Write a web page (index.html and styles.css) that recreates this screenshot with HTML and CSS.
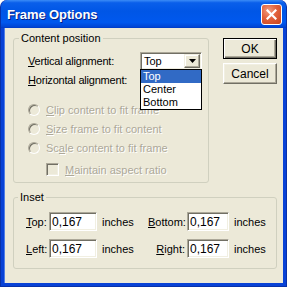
FILE: index.html
```html
<!DOCTYPE html>
<html lang="en">
<head>
    <meta charset="UTF-8">
    <title>Frame Options</title>
    <link rel="stylesheet" href="styles.css">
</head>
<body>

    <div class="window">
        <div class="titlebar">
            <span class="title">Frame Options</span>
            <button class="close-btn" title="Close">
                <svg width="11" height="11" viewBox="0 0 11 11">
                    <path d="M1.5 1.5 L9.5 9.5 M9.5 1.5 L1.5 9.5" stroke="#fff" stroke-width="2.2" stroke-linecap="square"/>
                </svg>
            </button>
        </div>

        <div class="client">
            <div class="top-row">
                <fieldset class="group content-group">
                    <legend>Content position</legend>

                    <div class="field-row">
                        <span class="field-label"><u>V</u>ertical alignment:</span>
                        <div class="combo">
                            <span class="combo-value">Top</span>
                            <span class="combo-btn">
                                <svg width="7" height="4" viewBox="0 0 7 4"><path d="M0 0 H7 L3.5 4 Z" fill="#000"/></svg>
                            </span>
                            <ul class="combo-list">
                                <li class="selected">Top</li>
                                <li>Center</li>
                                <li>Bottom</li>
                            </ul>
                        </div>
                    </div>

                    <div class="field-row">
                        <span class="field-label"><u>H</u>orizontal alignment:</span>
                        <div class="combo"></div>
                    </div>

                    <div class="options">
                        <div class="option disabled"><span class="radio"></span><span><u>C</u>lip content to fit frame</span></div>
                        <div class="option disabled"><span class="radio"></span><span><u>S</u>ize frame to fit content</span></div>
                        <div class="option disabled"><span class="radio"></span><span>Sc<u>a</u>le content to fit frame</span></div>
                        <div class="option disabled sub"><span class="checkbox"></span><span><u>M</u>aintain aspect ratio</span></div>
                    </div>
                </fieldset>

                <div class="buttons">
                    <button class="btn btn-default">OK</button>
                    <button class="btn">Cancel</button>
                </div>
            </div>

            <fieldset class="group inset-group">
                <legend>Inset</legend>
                <div class="inset-grid">
                    <span class="inset-label"><u>T</u>op:</span>
                    <input class="text-field" type="text" value="0,167">
                    <span class="unit">inches</span>
                    <span class="inset-label right"><u>B</u>ottom:</span>
                    <input class="text-field narrow" type="text" value="0,167">
                    <span class="unit">inches</span>

                    <span class="inset-label"><u>L</u>eft:</span>
                    <input class="text-field" type="text" value="0,167">
                    <span class="unit">inches</span>
                    <span class="inset-label right"><u>R</u>ight:</span>
                    <input class="text-field narrow" type="text" value="0,167">
                    <span class="unit">inches</span>
                </div>
            </fieldset>
        </div>
    </div>

</body>
</html>
```

FILE: styles.css
```css
* {
    margin: 0;
    padding: 0;
    box-sizing: border-box;
}
html, body {
    width: 287px;
    height: 287px;
    background-color: #ffffff;
    font-family: "Liberation Sans", Arial, sans-serif;
    font-size: 11px;
    color: #000;
}
.window {
    width: 287px;
    height: 287px;
    display: flex;
    flex-direction: column;
    background-color: #0842d6;
    border-radius: 7px 7px 0 0;
    border: 1px solid #0831a8;
    border-top: none;
}
.titlebar {
    height: 28px;
    display: flex;
    align-items: center;
    justify-content: space-between;
    padding: 0 4px 0 6px;
    border-radius: 7px 7px 0 0;
    background: linear-gradient(#3b8cf7 0%, #0a5fea 10%, #0056e6 40%, #0058ee 80%, #0046d6 95%, #003ac4 100%);
}
.title {
    color: #fff;
    font-weight: bold;
    font-size: 13px;
    letter-spacing: -0.1px;
    text-shadow: 1px 1px #0a1f80;
    padding-top: 1px;
}
.close-btn {
    width: 21px;
    height: 21px;
    border: 1px solid #fff;
    border-radius: 3px;
    background: radial-gradient(circle at 35% 30%, #f29c7f 0%, #e2613b 45%, #c8431c 100%);
    display: flex;
    align-items: center;
    justify-content: center;
    margin-top: 1px;
}
.client {
    flex-grow: 1;
    background-color: #ece9d8;
    margin: 0 3px 3px 3px;
    padding: 4px 6px 0 8px;
    border-left: 1px solid #4f7ee6;
}
.top-row {
    display: flex;
    gap: 14px;
    align-items: flex-start;
}
.group {
    border: 1px solid #d0d0bf;
    border-radius: 3px;
}
.group legend {
    padding: 0 2px;
    line-height: 13px;
}
.content-group {
    width: 197px;
    height: 151px;
    padding: 6px 0 0 14px;
}
.content-group legend {
    margin-left: -9px;
}
.field-row {
    display: flex;
    align-items: center;
    height: 19px;
}
.field-label {
    width: 112px;
    white-space: nowrap;
    letter-spacing: -0.2px;
}
.combo {
    position: relative;
    width: 62px;
    height: 18px;
    background-color: #fff;
    border: 1px solid;
    border-color: #aca899 #fff #fff #aca899;
    box-shadow: inset 1px 1px #716f64, inset -1px -1px #f1efe2;
    display: flex;
    align-items: center;
    padding-left: 3px;
}
.combo-value {
    flex-grow: 1;
}
.combo-btn {
    width: 16px;
    height: 14px;
    margin-right: 1px;
    background-color: #ece9d8;
    border: 1px solid;
    border-color: #f1efe2 #716f64 #716f64 #f1efe2;
    box-shadow: inset -1px -1px #aca899, inset 1px 1px #fff;
    display: flex;
    align-items: center;
    justify-content: center;
}
.combo-list {
    position: absolute;
    top: 16px;
    left: -1px;
    width: 62px;
    list-style: none;
    background-color: #fff;
    border: 1px solid #000;
    z-index: 2;
}
.combo-list li {
    height: 13px;
    line-height: 13px;
    padding-left: 2px;
}
.combo-list li.selected {
    background-color: #316ac5;
    color: #fff;
}
.options {
    display: flex;
    flex-direction: column;
    padding-top: 14px;
    gap: 6px;
}
.option {
    display: flex;
    align-items: center;
    gap: 6px;
    height: 13px;
}
.option.sub {
    padding-left: 18px;
    margin-top: 3px;
}
.option.disabled {
    color: #aca899;
    text-shadow: 1px 1px #fff;
}
.radio {
    width: 12px;
    height: 12px;
    border-radius: 50%;
    border: 1px solid;
    border-color: #aca899 #fff #fff #aca899;
    background-color: #ece9d8;
    box-shadow: inset 1px 1px #716f64;
}
.checkbox {
    width: 13px;
    height: 13px;
    border: 1px solid;
    border-color: #aca899 #fff #fff #aca899;
    background-color: #ece9d8;
    box-shadow: inset 1px 1px #716f64, inset -1px -1px #f1efe2;
}
.buttons {
    display: flex;
    flex-direction: column;
    gap: 4px;
    padding-top: 6px;
}
.btn {
    width: 54px;
    height: 21px;
    font-family: "Liberation Sans", Arial, sans-serif;
    font-size: 12px;
    background-color: #ece9d8;
    border: 1px solid;
    border-color: #fff #716f64 #716f64 #fff;
    box-shadow: inset -1px -1px #aca899, inset 1px 1px #f1efe2;
}
.btn-default {
    border: 1px solid #000;
    box-shadow: inset 1px 1px #fff, inset -1px -1px #716f64, inset -2px -2px #aca899;
}
.inset-group {
    width: 264px;
    height: 78px;
    margin-top: 8px;
    padding: 8px 0 0 12px;
}
.inset-group legend {
    margin-left: -8px;
}
.inset-grid {
    display: grid;
    grid-template-columns: 23px 48px 51px 39px 42px auto;
    row-gap: 8px;
    align-items: center;
}
.inset-label.right {
    text-align: right;
    padding-right: 2px;
}
.unit {
    padding-left: 5px;
}
.text-field {
    width: 48px;
    height: 19px;
    font-family: "Liberation Sans", Arial, sans-serif;
    font-size: 12px;
    padding-left: 2px;
    background-color: #fff;
    border: 1px solid;
    border-color: #aca899 #fff #fff #aca899;
    box-shadow: inset 1px 1px #716f64, inset -1px -1px #f1efe2;
    outline: none;
}
.text-field.narrow {
    width: 42px;
}
```
